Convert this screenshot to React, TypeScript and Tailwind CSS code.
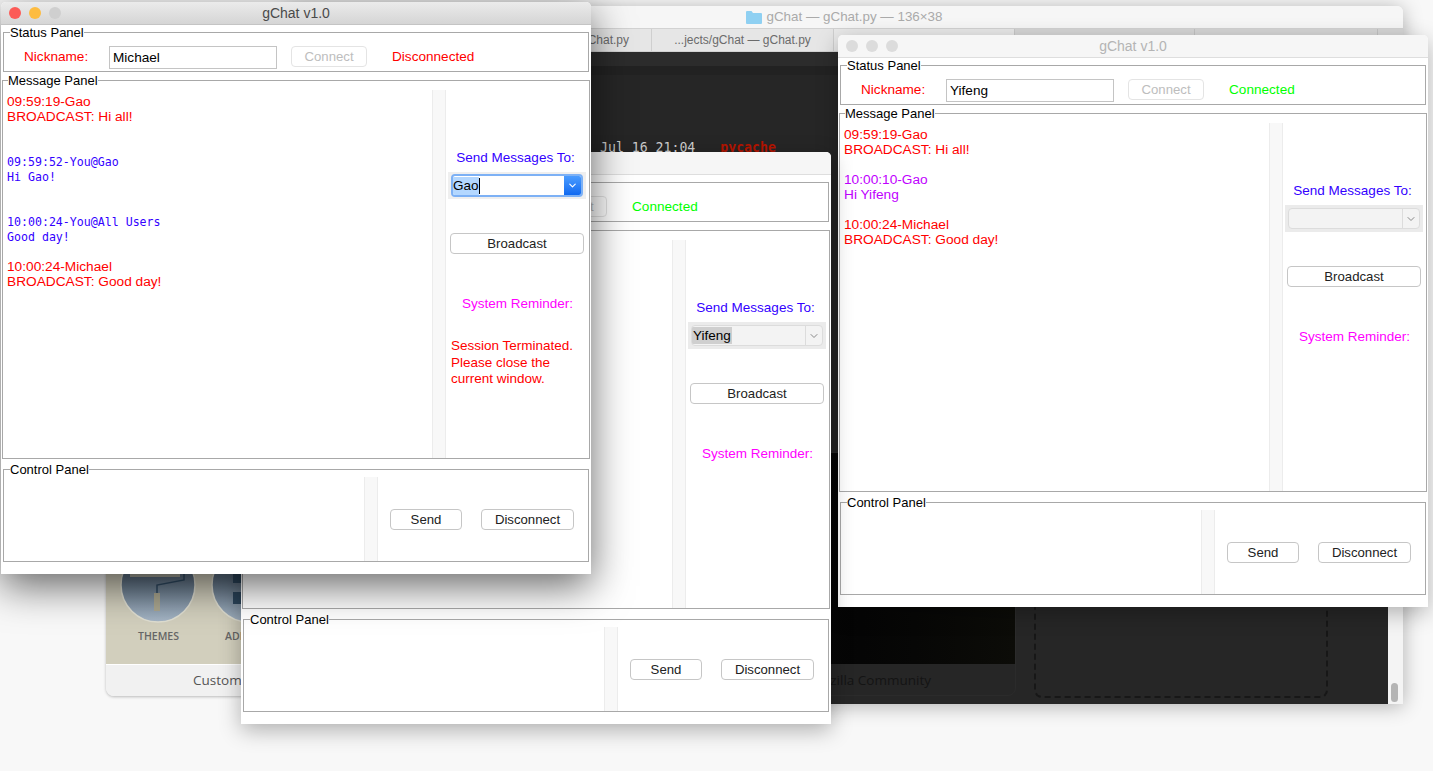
import { ChevronDown } from "lucide-react";

type Message = {
  head: string;
  body: string;
  color: string;
  mono?: boolean;
  gap?: string;
};

type ChatProps = {
  className: string;
  active?: boolean;
  nickname: string;
  connected: boolean;
  target: "focused" | "selected" | "empty";
  messages: Message[];
  terminated?: boolean;
};

const michaelMessages: Message[] = [
  { head: "09:59:19-Gao", body: "BROADCAST: Hi all!", color: "text-[#ff0000]" },
  { head: "09:59:52-You@Gao", body: "Hi Gao!", color: "text-[#3300ff]", mono: true, gap: "mt-[31px]" },
  { head: "10:00:24-You@All Users", body: "Good day!", color: "text-[#3300ff]", mono: true, gap: "mt-[30px]" },
  { head: "10:00:24-Michael", body: "BROADCAST: Good day!", color: "text-[#ff0000]", gap: "mt-[14px]" },
];

const yifengMessages: Message[] = [
  { head: "09:59:19-Gao", body: "BROADCAST: Hi all!", color: "text-[#ff0000]" },
  { head: "10:00:10-Gao", body: "Hi Yifeng", color: "text-[#bf00ff]", gap: "mt-[15px]" },
  { head: "10:00:24-Michael", body: "BROADCAST: Good day!", color: "text-[#ff0000]", gap: "mt-[15px]" },
];

function Button({ label, width, disabled }: { label: string; width: string; disabled?: boolean }) {
  return (
    <button
      className={`h-[21px] ${width} rounded-[4px] border bg-white text-[13.2px] leading-none ${
        disabled ? "border-[#e4e4e4] text-[#bdbdbd]" : "border-[#c6c6c6] text-[#222]"
      }`}
    >
      {label}
    </button>
  );
}

function Strip() {
  return <div className="w-[14px] shrink-0 border-x border-[#ececec] bg-[#f8f8f8]" />;
}

function TargetSelect({ target }: { target: ChatProps["target"] }) {
  if (target === "focused") {
    return (
      <div className="mt-[7px] ml-[2px] flex h-[27px] w-[138px] items-center bg-[#efefef] px-[3px]">
        <div className="flex h-[23px] w-full overflow-hidden rounded-[4px] border-2 border-[#7db1f5] bg-white">
          <div className="flex flex-1 items-center text-[13.5px] text-black">
            <span className="h-[18px] bg-[#b3d7ff] leading-[18px]">Gao</span>
            <span className="h-[16px] w-px bg-black" />
          </div>
          <div className="flex w-[17px] items-center justify-center bg-gradient-to-b from-[#4a9cff] to-[#0f69f0]">
            <ChevronDown size={11} strokeWidth={2.5} className="text-white" />
          </div>
        </div>
      </div>
    );
  }
  return (
    <div className="mt-[7px] ml-[2px] flex h-[27px] w-[138px] items-center bg-[#ebebeb] px-[3px]">
      <div className="flex h-[21px] w-full overflow-hidden rounded-[4px] border border-[#dcdcdc] bg-[#f3f3f3]">
        <div className="flex flex-1 items-center text-[13.5px] text-black">
          {target === "selected" && <span className="h-[17px] bg-[#cfcfcf] pl-[1px] pr-[1px] leading-[17px]">Yifeng</span>}
        </div>
        <div className="flex w-[17px] items-center justify-center border-l border-[#dcdcdc]">
          <ChevronDown size={12} strokeWidth={2} className="text-[#888]" />
        </div>
      </div>
    </div>
  );
}

function ChatWindow({ className, active, nickname, connected, target, messages, terminated }: ChatProps) {
  return (
    <div
      className={`absolute flex h-[572px] w-[590px] flex-col rounded-t-[5px] bg-white ${className}`}
    >
      <div
        className={`relative flex h-[23px] shrink-0 items-center justify-center rounded-t-[5px] border-b text-[14px] ${
          active
            ? "border-[#c4c4c4] bg-gradient-to-b from-[#ebebeb] to-[#d5d5d5] text-[#4a4a4a]"
            : "border-[#dedede] bg-[#f6f6f6] text-[#b4b4b4]"
        }`}
      >
        <div className="absolute top-[5px] left-[8px] flex gap-[8px]">
          <span className={`h-[12px] w-[12px] rounded-full ${active ? "bg-[#fc5b57]" : "bg-[#dcdcdc]"}`} />
          <span className={`h-[12px] w-[12px] rounded-full ${active ? "bg-[#fdbc40]" : "bg-[#dcdcdc]"}`} />
          <span className={`h-[12px] w-[12px] rounded-full ${active ? "bg-[#cfcfcf]" : "bg-[#dcdcdc]"}`} />
        </div>
        gChat v1.0
      </div>

      <fieldset className="mt-px ml-[2px] h-[46px] w-[586px] shrink-0 border border-[#a8a8a8]">
        <legend className="ml-[6px] text-[13px] leading-[13px] text-black">Status Panel</legend>
        <div className="flex h-[32px] items-center pt-[4px] pl-[20px] text-[13.6px]">
          <span className="w-[85px] text-[#ff0000]">Nickname:</span>
          <input
            readOnly
            value={nickname}
            className="h-[23px] w-[168px] border border-[#c4c4c4] bg-white pl-[3px] text-black outline-none"
          />
          <div className="ml-[14px]">
            <Button label="Connect" width="w-[76px]" disabled />
          </div>
          <span className={`ml-[25px] ${connected ? "text-[#00ff00]" : "text-[#ff0000]"}`}>
            {connected ? "Connected" : "Disconnected"}
          </span>
        </div>
      </fieldset>

      <fieldset className="mt-[2px] ml-[1px] h-[385px] w-[588px] shrink-0 border border-[#a8a8a8]">
        <legend className="ml-[5px] text-[13px] leading-[13px] text-black">Message Panel</legend>
        <div className="mt-[3px] flex h-[368px]">
          <div className="w-[429px] shrink-0 pt-[4px] pl-[4px] text-[13.7px] leading-[15px]">
            {messages.map((m) => (
              <div
                key={m.head}
                className={`${m.color} ${m.gap ?? ""} ${
                  m.mono ? "font-['DejaVu_Sans_Mono',monospace] text-[11.6px]" : ""
                }`}
              >
                <div>{m.head}</div>
                <div>{m.body}</div>
              </div>
            ))}
          </div>
          <Strip />
          <div className="flex flex-1 flex-col text-[13.5px]">
            <div className="mt-[60px] pr-[4px] text-center leading-[15px] text-[#3300ff]">Send Messages To:</div>
            <TargetSelect target={target} />
            <div className="mt-[34px] ml-[4px]">
              <Button label="Broadcast" width="w-[134px]" />
            </div>
            <div className="mt-[42px] text-center leading-[15px] text-[#ff00ff]">System Reminder:</div>
            {terminated && (
              <div className="mt-[27px] pl-[5px] leading-[16.5px] text-[#ff0000]">
                Session Terminated.
                <br />
                Please close the
                <br />
                current window.
              </div>
            )}
          </div>
        </div>
      </fieldset>

      <fieldset className="mt-[4px] ml-[2px] h-[99px] w-[586px] shrink-0 border border-[#a8a8a8]">
        <legend className="ml-[6px] text-[13px] leading-[13px] text-black">Control Panel</legend>
        <div className="mt-px flex h-[84px]">
          <div className="w-[360px] shrink-0" />
          <Strip />
          <div className="flex flex-1 items-center gap-[19px] pt-px pl-[12px]">
            <Button label="Send" width="w-[72px]" />
            <Button label="Disconnect" width="w-[93px]" />
          </div>
        </div>
      </fieldset>
    </div>
  );
}

function ThemesCard() {
  return (
    <div className="absolute top-[500px] left-[106px] flex h-[196px] w-[420px] flex-col overflow-hidden rounded-b-[8px] shadow-[0_1px_3px_rgba(0,0,0,0.25)]">
      <div className="relative flex-1 bg-[#d2cfbd]">
        <svg className="absolute top-0 left-0" width="200" height="164" viewBox="0 0 200 164">
          <defs>
            <linearGradient id="dial" x1="0" y1="0" x2="0" y2="1">
              <stop offset="0.4" stopColor="#5d7083" />
              <stop offset="1" stopColor="#a6b6c6" />
            </linearGradient>
          </defs>
          <circle cx="52" cy="85" r="37" fill="url(#dial)" stroke="#e0dfd2" strokeWidth="1.5" />
          <circle cx="143" cy="85" r="37" fill="url(#dial)" stroke="#e0dfd2" strokeWidth="1.5" />
          <rect x="24" y="70" width="50" height="7" fill="#a8a89c" />
          <path d="M78 70V80L51 85V93" fill="none" stroke="#2f4a62" strokeWidth="1.5" />
          <rect x="48" y="93" width="6" height="18" fill="#aaa68f" />
          <rect x="127" y="73" width="8" height="10" fill="#2f4a62" />
          <rect x="127" y="92" width="8" height="12" fill="#2f4a62" />
        </svg>
        <span className="absolute top-[129px] left-[32px] font-['Open_Sans',sans-serif] text-[10.5px] font-semibold text-[#666]">
          THEMES
        </span>
        <span className="absolute top-[129px] left-[119px] font-['Open_Sans',sans-serif] text-[10.5px] font-semibold text-[#666]">
          ADD-ONS
        </span>
      </div>
      <div className="h-[32px] border-t border-white bg-[#f1f1f1] pl-[87px] font-['Open_Sans',sans-serif] text-[13.5px] leading-[30px] text-[#555]">
        Customize
      </div>
    </div>
  );
}

function TerminalWindow() {
  return (
    <div className="absolute top-[6px] left-[286px] flex h-[698px] w-[1117px] flex-col overflow-hidden rounded-t-[6px] shadow-[0_2px_20px_rgba(0,0,0,0.3)]">
      <div className="flex h-[22px] shrink-0 items-center justify-center gap-[4px] bg-[#f6f6f6] text-[13.4px] text-[#aaaaaa]">
        <svg width="16" height="14" viewBox="0 0 16 14">
          <path d="M0 2a1 1 0 0 1 1-1h4.5l1.5 2h8a1 1 0 0 1 1 1v9a1 1 0 0 1-1 1H1a1 1 0 0 1-1-1z" fill="#8fd0f2" />
        </svg>
        gChat — gChat.py — 136×38
      </div>
      <div className="flex h-[24px] shrink-0 border-y border-[#d2d2d2] bg-[#e6e6e6] text-center text-[12px] leading-[22px] text-[#6b6b6b]">
        <div className="w-[366px] border-r border-[#cfcfcf] pr-[22px] text-right">...jects/gChat — gChat.py</div>
        <div className="w-[182px] border-r border-[#cfcfcf]">...jects/gChat — gChat.py</div>
        <div className="w-[181px] border-r border-[#c8c8c8] bg-[#e9e9e9]" />
        <div className="w-[180px] border-r border-[#c2c2c2] bg-[#d6d6d6]" />
        <div className="w-[183px] border-r border-[#c2c2c2] bg-[#d6d6d6]" />
        <div className="flex-1 bg-[#d6d6d6]" />
      </div>
      <div className="relative flex-1 bg-[#262626]">
        <div className="h-[14px] bg-[#2c2c2c]" />
        <div className="h-[9px] bg-[#222222]" />
        <div className="flex gap-[25px] pt-[65px] pl-[314px] font-['DejaVu_Sans_Mono',monospace] text-[13.2px] leading-[16px]">
          <span className="text-[#cfcfcf]">Jul 16 21:04</span>
          <span className="font-bold text-[#b51400]">pycache</span>
        </div>

        {/* page showing through the terminal */}
        <div className="absolute top-[400px] left-[420px] h-[244px] w-[310px] overflow-hidden rounded-b-[8px] border border-[#2b2b2b]">
          <div className="h-[211px] bg-gradient-to-r from-[#0a0a0a] via-[#050505] to-[#0c0c08]" />
          <div className="pr-[84px] text-right font-['Open_Sans',sans-serif] text-[13.5px] leading-[32px] text-[#141414]">
            Mozilla Community
          </div>
        </div>
        <div className="absolute top-[500px] left-[748px] h-[146px] w-[294px] rounded-[8px] border-2 border-dashed border-[#171717]" />
        <div className="absolute top-[400px] right-0 h-[252px] w-[15px] bg-[#f4f4f4]">
          <div className="absolute right-[5px] bottom-[2px] h-[19px] w-[7px] rounded-full bg-[#b4b4b4]" />
        </div>
      </div>
    </div>
  );
}

export default function App() {
  return (
    <div className="relative h-[771px] w-[1433px] overflow-hidden bg-[#f8f8f8] font-['Liberation_Sans',Arial,sans-serif]">
      <ThemesCard />
      <TerminalWindow />
      <ChatWindow
        className="top-[35px] left-[838px] shadow-[0_6px_22px_rgba(0,0,0,0.28)]"
        nickname="Yifeng"
        connected
        target="empty"
        messages={yifengMessages}
      />
      <ChatWindow
        className="top-[152px] left-[241px] shadow-[0_6px_22px_rgba(0,0,0,0.3)]"
        nickname="Gao"
        connected
        target="selected"
        messages={[]}
      />
      <ChatWindow
        className="top-[2px] left-[1px] shadow-[0_12px_40px_rgba(0,0,0,0.6)]"
        active
        nickname="Michael"
        connected={false}
        target="focused"
        messages={michaelMessages}
        terminated
      />
    </div>
  );
}
